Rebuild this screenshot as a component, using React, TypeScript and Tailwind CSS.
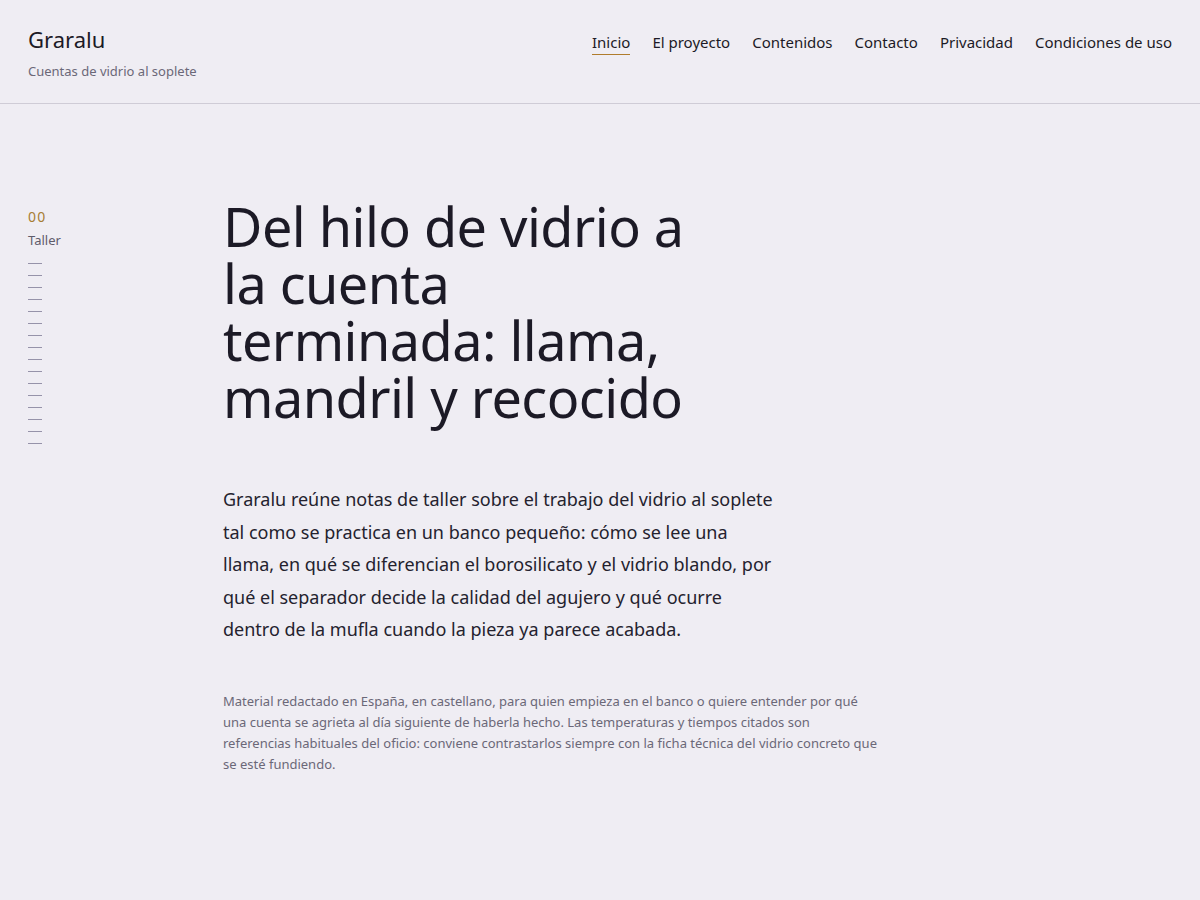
import React from "react";

const nav = ["Inicio", "El proyecto", "Contenidos", "Contacto", "Privacidad", "Condiciones de uso"];

export default function App() {
  const ticks = Array.from({ length: 16 });
  return (
    <div
      className="min-h-[900px] bg-[#efedf3] text-[#1c1a26]"
      style={{ fontFamily: '"Noto Sans", "Open Sans", sans-serif' }}
    >
      <header className="flex items-start justify-between border-b border-[#cfccd6] px-7 pt-[25px] pb-[23px]">
        <div>
          <div className="text-[22px] leading-[28px] text-[#1c1a26]">Graralu</div>
          <div className="mt-[9px] text-[13px] leading-[18px] text-[#6b6878]">Cuentas de vidrio al soplete</div>
        </div>
        <nav className="mt-[5px] flex gap-[22px] text-[15px] leading-[24px]">
          {nav.map((n, i) => (
            <a
              key={n}
              className={
                i === 0
                  ? "border-b border-[#b07c2c] pb-0 text-[#1c1a26]"
                  : "text-[#1c1a26]"
              }
            >
              {n}
            </a>
          ))}
        </nav>
      </header>
      <main className="flex px-7 pt-[94px]">
        <aside className="w-[195px] shrink-0 pt-[10px]">
          <div className="text-[14px] leading-[18px] tracking-[0.08em] text-[#a77d33]">00</div>
          <div className="mt-[5px] text-[13px] leading-[18px] text-[#5f5c6b]">Taller</div>
          <div className="mt-[14px] flex flex-col gap-[11px]">
            {ticks.map((_, i) => (
              <div key={i} className="h-px w-[14px] bg-[#9693a9]" />
            ))}
          </div>
        </aside>
        <div className="flex-1">
          <h1 className="max-w-[480px] text-[54px] leading-[57px] font-normal tracking-[-0.01em] text-[#1c1a26]">
            Del hilo de vidrio a la cuenta terminada: llama, mandril y recocido
          </h1>
          <p className="mt-[57px] max-w-[560px] text-[18px] leading-[32.5px] text-[#24222e]">
            Graralu reúne notas de taller sobre el trabajo del vidrio al soplete tal como se practica en un banco
            pequeño: cómo se lee una llama, en qué se diferencian el borosilicato y el vidrio blando, por qué el
            separador decide la calidad del agujero y qué ocurre dentro de la mufla cuando la pieza ya parece acabada.
          </p>
          <p className="mt-[45px] max-w-[655px] text-[13px] leading-[21px] text-[#6b6878]">
            Material redactado en España, en castellano, para quien empieza en el banco o quiere entender por qué una
            cuenta se agrieta al día siguiente de haberla hecho. Las temperaturas y tiempos citados son referencias
            habituales del oficio: conviene contrastarlos siempre con la ficha técnica del vidrio concreto que se esté
            fundiendo.
          </p>
        </div>
      </main>
    </div>
  );
}
